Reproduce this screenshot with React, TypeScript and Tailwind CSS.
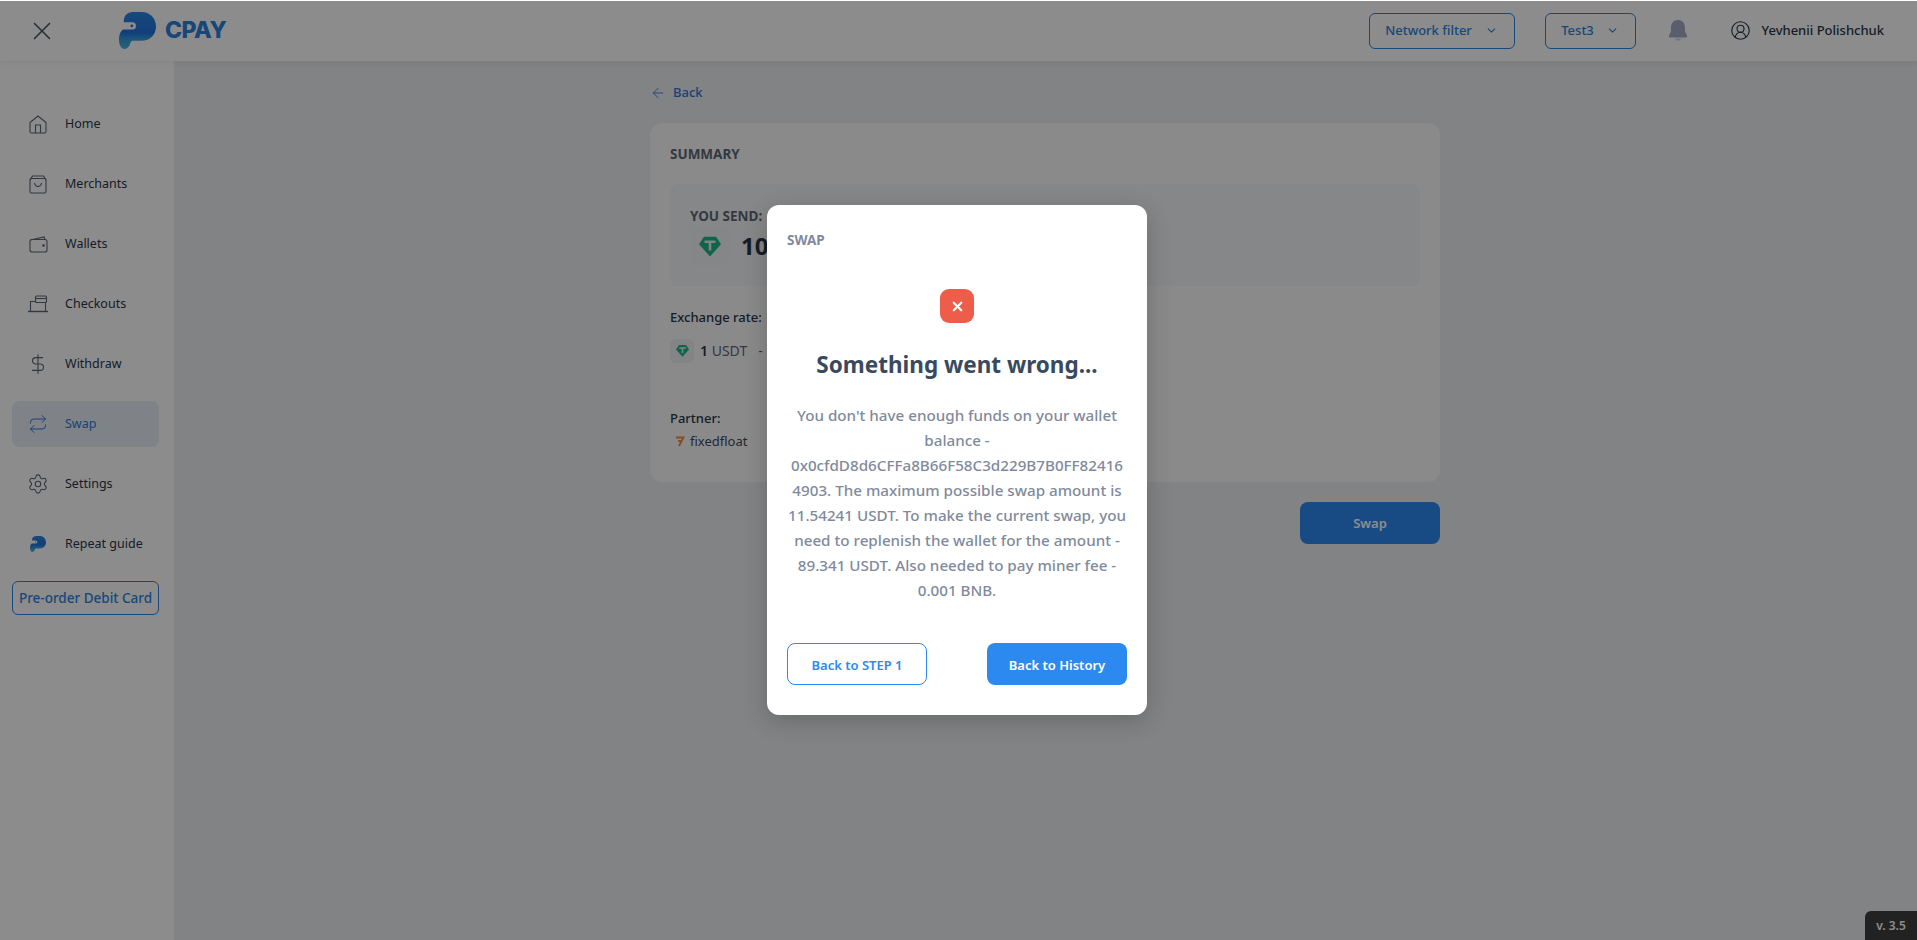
import {
  ArrowLeft,
  ChevronDown,
  CircleUserRound,
  DollarSign,
  Repeat,
  Settings,
  X,
} from "lucide-react";
import type { ReactNode } from "react";

const font = "font-['Noto_Sans',sans-serif]";

function HomeIcon() {
  return (
    <svg width="18" height="19" viewBox="0 0 18 19" fill="none" stroke="currentColor" strokeWidth="1.1">
      <path d="M1 7.5 9 1l8 6.5V16.5a1.5 1.5 0 0 1-1.5 1.5h-13A1.5 1.5 0 0 1 1 16.5z" strokeLinejoin="round" />
      <path d="M6.5 18V10h5v8" />
    </svg>
  );
}

function BagIcon() {
  return (
    <svg width="18" height="19" viewBox="0 0 18 19" fill="none" stroke="currentColor" strokeWidth="1.1">
      <rect x="1" y="3.5" width="16" height="14.5" rx="1.5" />
      <path d="M1 5 3.5 1h11L17 5" />
      <path d="M5.5 8c.5 2.500 2 3.500 3.500 3.500s3-1 3.500-3.500" />
    </svg>
  );
}

function WalletIcon() {
  return (
    <svg width="19" height="17" viewBox="0 0 19 17" fill="none" stroke="currentColor" strokeWidth="1.1">
      <rect x="1" y="3.500" width="17" height="12.500" rx="2" />
      <path d="M1.500 4 15 1l1 2.500" />
      <circle cx="14.500" cy="9.500" r="0.800" fill="currentColor" />
    </svg>
  );
}

function CheckoutIcon() {
  return (
    <svg width="20" height="18" viewBox="0 0 20 18" fill="none" stroke="currentColor" strokeWidth="1.1">
      <rect x="7.500" y="1" width="11" height="6.500" rx="1" />
      <path d="M7.500 3.500h11" />
      <path d="M2.500 16V6.500h5M17.500 7.500V16" />
      <path d="M0 16.500h20" strokeWidth="1.400" />
    </svg>
  );
}

// same parrot mark in the header and the guide item
function ParrotMark({ size, id }: { size: number; id: string }) {
  return (
    <svg width={size} height={size} viewBox="0 0 36 36">
      <defs>
        <linearGradient id={id} x1="0" y1="0" x2="0" y2="1">
          <stop offset="0" stopColor="#2b86e6" />
          <stop offset="0.55" stopColor="#2272dc" />
          <stop offset="0.72" stopColor="#2f9be0" />
          <stop offset="1" stopColor="#4ab4dc" />
        </linearGradient>
      </defs>
      <path
        d="M5 6C6 2 10 0 14 0h8c8 0 14 6 14 14s-6 14-14 14h-9c-1 0-1.500 1-2 2.500C10 34 8 36 5.500 36 2 36 0 32 0 27c0-4 1-8 4-10h9a3.500 3.500 0 0 0 0-7H4.500z"
        fill={`url(#${id})`}
      />
      <circle cx="12.500" cy="13.500" r="1.300" fill="#2272dc" />
    </svg>
  );
}

function TetherIcon({ size }: { size: number }) {
  return (
    <svg width={size} height={size} viewBox="0 0 20 20">
      <path d="M4.500 1.500h11L20 8.500 10 19.500 0 8.500z" fill="#1fb586" />
      <path d="M5 5h10v2.200h-3.800V14H8.800V7.200H5z" fill="#dff5ec" />
    </svg>
  );
}

function NavItem({ icon, label, active }: { icon: ReactNode; label: string; active?: boolean }) {
  return (
    <div
      className={`flex h-[46px] items-center rounded-lg pl-[14px] ${
        active ? "bg-[#e7edf5] text-[#2c79d6]" : "text-[#2b3648]"
      }`}
    >
      <span className={`flex w-[24px] justify-center ${active ? "text-[#2c79d6]" : "text-[#5d6675]"}`}>{icon}</span>
      <span className="ml-[15px] text-[12.500px] font-normal">{label}</span>
    </div>
  );
}

function Header() {
  return (
    <header className="z-10 flex h-[61px] items-center bg-white pr-[33px] shadow-[0_2px_6px_rgba(0,0,0,0.06)]">
      <X className="ml-[27px] text-[#4a5563]" size={30} strokeWidth={1.300} />
      <div className="ml-[62px] flex items-center">
        <ParrotMark size={37} id="logoGrad" />
        <span className="ml-[9px] font-['Inter',sans-serif] text-[23px] font-extrabold tracking-[-0.5px] text-[#2b80dd]">
          CPAY
        </span>
      </div>
      <div className="ml-auto flex h-[36px] w-[146px] items-center justify-center gap-[13px] rounded-md border border-[#2c82e0] text-[13px] font-medium text-[#2c82e0]">
        Network filter
        <ChevronDown size={13} />
      </div>
      <div className="ml-[30px] flex h-[36px] w-[91px] items-center justify-center gap-[12px] rounded-md border border-[#2c82e0] text-[13px] font-medium text-[#2c82e0]">
        Test3
        <ChevronDown size={13} />
      </div>
      <svg className="ml-[33px] text-[#a5abc5]" width="18" height="21" viewBox="0 0 18 21" fill="currentColor">
        <path d="M9 0c4.500 0 7 3.500 7 7.500v3c0 2 1 3 2 4.500v1.500c0 .5-.5 1-1 1H1c-.5 0-1-.5-1-1V15c1-1.500 2-2.500 2-4.500v-3C2 3.500 4.500 0 9 0z" />
        <path d="M6 18.500h6c-.5 1.500-1.500 2.200-3 2.200s-2.500-.7-3-2.200z" opacity="0.500" />
      </svg>
      <CircleUserRound className="ml-[43px] text-[#2b3648]" size={21} strokeWidth={1.300} />
      <span className="ml-[11px] text-[13px] font-medium text-[#2b3648]">Yevhenii Polishchuk</span>
    </header>
  );
}

function Sidebar() {
  return (
    <aside className="flex w-[174px] shrink-0 flex-col gap-[14px] bg-white pt-[40px] pr-[15px] pl-[12px]">
      <NavItem icon={<HomeIcon />} label="Home" />
      <NavItem icon={<BagIcon />} label="Merchants" />
      <NavItem icon={<WalletIcon />} label="Wallets" />
      <NavItem icon={<CheckoutIcon />} label="Checkouts" />
      <NavItem icon={<DollarSign size={22} strokeWidth={1.200} />} label="Withdraw" />
      <NavItem active icon={<Repeat size={20} strokeWidth={1.200} />} label="Swap" />
      <NavItem icon={<Settings size={22} strokeWidth={1.200} />} label="Settings" />
      <NavItem icon={<ParrotMark size={16} id="guideGrad" />} label="Repeat guide" />
      <div className="flex h-[34px] items-center justify-center rounded-md border border-[#2c82e0] text-[13.500px] font-medium text-[#2c82e0]">
        Pre-order Debit Card
      </div>
    </aside>
  );
}

function Summary() {
  return (
    <div className="mx-auto w-[790px]">
      <div className="flex h-[62px] items-center gap-[5px] pt-[1px] text-[13px] font-medium text-[#2c79d6]">
        <ArrowLeft size={16} strokeWidth={1.300} />
        <span className="ml-[2px]">Back</span>
      </div>
      <section className="h-[359px] rounded-xl bg-[#fcfcfc] px-[20px] pt-[21px]">
        <h2 className="text-[13.500px] font-bold text-[#5f6877]">SUMMARY</h2>
        <div className="mt-[20px] h-[102px] rounded-lg bg-[#f5f6f8] px-[20px] pt-[22px]">
          <p className="text-[13.500px] font-bold text-[#5f6877]">YOU SEND:</p>
          <div className="-mt-px flex items-center gap-[11px]">
            <span className="flex h-[40px] w-[40px] items-center justify-center rounded-md bg-[#f3f4f6]">
              <TetherIcon size={22} />
            </span>
            <span className="text-[24px] font-bold text-[#2b3648]">10</span>
          </div>
        </div>
        <p className="mt-[22px] text-[13px] font-medium text-[#2b3648]">Exchange rate:</p>
        <div className="mt-[11px] flex items-center gap-[6px] text-[14px] text-[#5f6877]">
          <span className="flex h-[24px] w-[24px] items-center justify-center rounded-md bg-[#eef0f3]">
            <TetherIcon size={13} />
          </span>
          <span>
            <b className="font-semibold text-[#2b3648]">1</b> USDT
          </span>
          <span className="ml-[5px]">-</span>
        </div>
        <p className="mt-[46px] text-[13px] font-medium text-[#2b3648]">Partner:</p>
        <div className="mt-[4px] flex items-center gap-[5px] pl-[5px] text-[13px] text-[#3f4a5c]">
          <svg width="10" height="12" viewBox="0 0 10 12" fill="none" stroke="#f08a3c" strokeWidth="1.800">
            <path d="M1 1.500h7.500L4 10" />
            <path d="M3 5h3" />
          </svg>
          fixedfloat
        </div>
      </section>
      <div className="mt-[20px] flex justify-end">
        <button className="h-[42px] w-[140px] rounded-lg bg-[#2c89f0] pt-[2px] text-[13px] font-semibold text-white">
          Swap
        </button>
      </div>
    </div>
  );
}

function ErrorModal() {
  return (
    <div className="absolute inset-x-0 top-px bottom-0 z-20 flex items-center justify-center bg-black/45 pr-[3px] pb-[21px]">
      <div className="flex h-[510px] w-[380px] flex-col rounded-xl bg-white px-[20px] pt-[25px] shadow-[0_6px_24px_rgba(0,0,0,0.2)]">
        <h3 className="text-[13.500px] font-bold text-[#7f8a9c]">SWAP</h3>
        <div className="mx-auto mt-[39px] flex h-[34px] w-[34px] items-center justify-center rounded-[9px] bg-[#ee5d4a]">
          <X className="text-white" size={15} strokeWidth={3.500} />
        </div>
        <p className="mt-[24px] text-center text-[22.500px] leading-[36px] font-bold text-[#3a4a5e]">
          Something went wrong...
        </p>
        <p className="mt-[20px] text-center text-[15.200px] leading-[25px] font-medium whitespace-nowrap text-[#7f8a9c]">
          You don't have enough funds on your wallet
          <br />
          balance -
          <br />
          0x0cfdD8d6CFFa8B66F58C3d229B7B0FF82416
          <br />
          4903. The maximum possible swap amount is
          <br />
          11.54241 USDT. To make the current swap, you
          <br />
          need to replenish the wallet for the amount -
          <br />
          89.341 USDT. Also needed to pay miner fee -
          <br />
          0.001 BNB.
        </p>
        <div className="mt-[40px] flex justify-between">
          <button className="h-[42px] w-[140px] rounded-lg border border-[#2c89f0] pt-[2px] text-[13px] font-semibold text-[#2c89f0]">
            Back to STEP 1
          </button>
          <button className="h-[42px] w-[140px] rounded-lg bg-[#2c89f0] pt-[2px] text-[13px] font-semibold text-white">
            Back to History
          </button>
        </div>
      </div>
    </div>
  );
}

export default function App() {
  return (
    <div className={`relative flex h-[940px] flex-col overflow-hidden bg-[#eceef2] ${font}`}>
      <Header />
      <div className="flex flex-1">
        <Sidebar />
        <main className="flex-1 pr-px">
          <Summary />
        </main>
      </div>
      <div className="absolute right-0 bottom-0 flex h-[29px] w-[52px] items-center justify-center rounded-tl-md bg-[#3f3f3f] text-[12px] font-semibold text-white">
        v. 3.5
      </div>
      <ErrorModal />
    </div>
  );
}
